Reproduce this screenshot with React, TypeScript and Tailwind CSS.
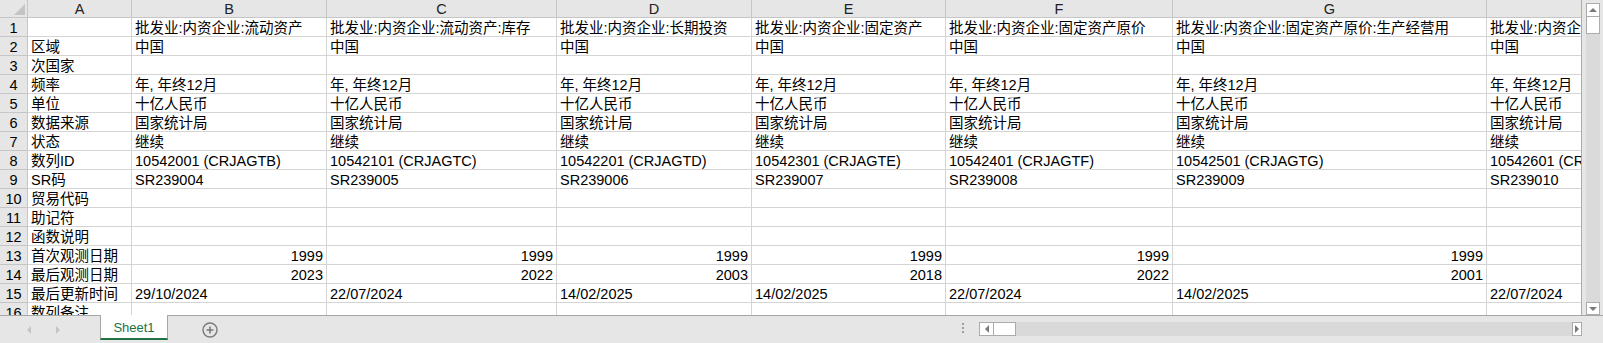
import React from 'react';

const COLS = [
  { key: 'A', width: 104 },
  { key: 'B', width: 195 },
  { key: 'C', width: 230 },
  { key: 'D', width: 195 },
  { key: 'E', width: 194 },
  { key: 'F', width: 227 },
  { key: 'G', width: 314 },
  { key: 'H', width: 198 },
];

const IDS = ['10542001 (CRJAGTB)', '10542101 (CRJAGTC)', '10542201 (CRJAGTD)', '10542301 (CRJAGTE)', '10542401 (CRJAGTF)', '10542501 (CRJAGTG)', '10542601 (CRJAGTH)'];
const SR = ['SR239004', 'SR239005', 'SR239006', 'SR239007', 'SR239008', 'SR239009', 'SR239010'];

type Cell = string | { n: string };

const repeat = (v: string): Cell[] => Array(7).fill(v);

const ROWS: Cell[][] = [
  ['', '批发业:内资企业:流动资产', '批发业:内资企业:流动资产:库存', '批发业:内资企业:长期投资', '批发业:内资企业:固定资产', '批发业:内资企业:固定资产原价', '批发业:内资企业:固定资产原价:生产经营用', '批发业:内资企业:固定资产原价:非生产经营用'],
  ['区域', ...repeat('中国')],
  ['次国家', ...repeat('')],
  ['频率', ...repeat('年, 年终12月')],
  ['单位', ...repeat('十亿人民币')],
  ['数据来源', ...repeat('国家统计局')],
  ['状态', ...repeat('继续')],
  ['数列ID', ...IDS],
  ['SR码', ...SR],
  ['贸易代码', ...repeat('')],
  ['助记符', ...repeat('')],
  ['函数说明', ...repeat('')],
  ['首次观测日期', { n: '1999' }, { n: '1999' }, { n: '1999' }, { n: '1999' }, { n: '1999' }, { n: '1999' }, ''],
  ['最后观测日期', { n: '2023' }, { n: '2022' }, { n: '2003' }, { n: '2018' }, { n: '2022' }, { n: '2001' }, ''],
  ['最后更新时间', '29/10/2024', '22/07/2024', '14/02/2025', '14/02/2025', '22/07/2024', '14/02/2025', '22/07/2024'],
  ['数列备注', ...repeat('')],
];

const Tri = ({ dir, className }: { dir: 'up' | 'down' | 'left' | 'right'; className?: string }) => {
  const pts = {
    up: '0,5 5,0 10,5',
    down: '0,0 10,0 5,5',
    left: '5,0 5,10 0,5',
    right: '0,0 0,10 5,5',
  }[dir];
  const vb = dir === 'up' || dir === 'down' ? '0 0 10 5' : '0 0 5 10';
  const size = dir === 'up' || dir === 'down' ? 'w-[8px] h-[4px]' : 'w-[4px] h-[8px]';
  return (
    <svg viewBox={vb} className={`${size} ${className ?? 'fill-[#7a7a7a]'}`}>
      <polygon points={pts} />
    </svg>
  );
};

const Grid = () => (
  <div className="w-[1582px] h-[315px] overflow-hidden bg-white border-r border-[#ababab]">
    {/* column headers */}
    <div className="flex h-[18px] w-max">
      <div className="w-[28px] h-[18px] bg-[#e6e6e6] border-r border-b border-[#c6c6c6] relative">
        <svg viewBox="0 0 12 12" className="absolute right-[2px] bottom-[2px] w-[11px] h-[11px] fill-[#c4c4c4]">
          <polygon points="12,0 12,12 0,12" />
        </svg>
      </div>
      {COLS.map(c => (
        <div
          key={c.key}
          style={{ width: c.width }}
          className="h-[18px] bg-[#e6e6e6] border-r border-b border-[#c6c6c6] text-center text-[14.5px] leading-[18px] text-[#222]"
        >
          {c.key}
        </div>
      ))}
    </div>

    {ROWS.map((row, i) => (
      <div key={i} className="flex h-[19px] w-max">
        <div className="w-[28px] h-[19px] bg-[#e6e6e6] border-r border-b border-[#c6c6c6] text-center text-[14.5px] leading-[20px] text-black">
          {i + 1}
        </div>
        {row.map((cell, j) => {
          const num = typeof cell === 'object';
          return (
            <div
              key={j}
              style={{ width: COLS[j].width }}
              className={`h-[19px] border-r border-b border-[#d4d4d4] text-[14.5px] leading-[20px] text-black whitespace-nowrap overflow-hidden ${
                num ? 'text-right pr-[3px]' : 'pl-[3px]'
              }`}
            >
              {num ? cell.n : cell}
            </div>
          );
        })}
      </div>
    ))}
  </div>
);

const VScroll = () => (
  <div className="w-[21px] h-[315px] bg-[#e6e6e6] flex flex-col items-center pt-[3px] pl-[1px]">
    <div className="w-[14px] h-[14px] bg-white border border-[#ababab] flex items-center justify-center">
      <Tri dir="up" />
    </div>
    <div className="w-[14px] h-[17px] bg-white border border-t-0 border-[#ababab]" />
    <div className="w-[14px] flex-1 bg-[#dadada]" />
    <div className="w-[14px] h-[13px] bg-white border border-[#ababab] flex items-center justify-center">
      <Tri dir="down" />
    </div>
  </div>
);

const BottomBar = () => (
  <div className="h-[28px] border-t border-[#a6a6a6] bg-[#e6e6e6] flex items-start">
    {/* sheet navigation */}
    <div className="w-[100px] h-full flex items-center pl-[27px] gap-[25px]">
      <Tri dir="left" className="fill-[#c4c4c4]" />
      <Tri dir="right" className="fill-[#c4c4c4]" />
    </div>

    <div className="w-[68px] h-[25px] -mt-px bg-white border-l border-r border-[#a6a6a6] border-b-2 border-b-[#217346] flex items-center justify-center text-[13px] text-[#217346] pt-[2px]">
      Sheet1
    </div>

    <div className="ml-[34px] mt-[6px]">
      <svg viewBox="0 0 16 16" className="w-[16px] h-[16px]">
        <circle cx="8" cy="8" r="7" fill="none" stroke="#7a7a7a" strokeWidth="1.4" />
        <path d="M8 4.5v7M4.5 8h7" stroke="#7a7a7a" strokeWidth="1.6" />
      </svg>
    </div>

    <div className="flex-1" />

    {/* splitter dots */}
    <div className="w-[17px] h-full flex flex-col gap-[2px] pt-[7px]">
      <div className="w-[2px] h-[2px] bg-[#a0a0a0]" />
      <div className="w-[2px] h-[2px] bg-[#a0a0a0]" />
      <div className="w-[2px] h-[2px] bg-[#a0a0a0]" />
    </div>

    {/* horizontal scrollbar */}
    <div className="w-[603px] h-[14px] mt-[6px] flex">
      <div className="w-[15px] h-[14px] bg-white border border-[#ababab] flex items-center justify-center">
        <Tri dir="left" />
      </div>
      <div className="w-[22px] h-[14px] bg-white border border-l-0 border-[#ababab]" />
      <div className="flex-1 bg-[#d9d9d9]" />
      <div className="w-[10px] h-[14px] bg-white border border-[#ababab] flex items-center justify-center">
        <Tri dir="right" />
      </div>
    </div>
    <div className="w-[21px]" />
  </div>
);

export default function App() {
  return (
    <div className="w-[1603px] h-[343px] bg-[#e6e6e6] flex flex-col overflow-hidden font-['Liberation_Sans','Noto_Sans_CJK_SC',sans-serif]">
      <div className="flex h-[315px]">
        <Grid />
        <VScroll />
      </div>
      <BottomBar />
    </div>
  );
}
